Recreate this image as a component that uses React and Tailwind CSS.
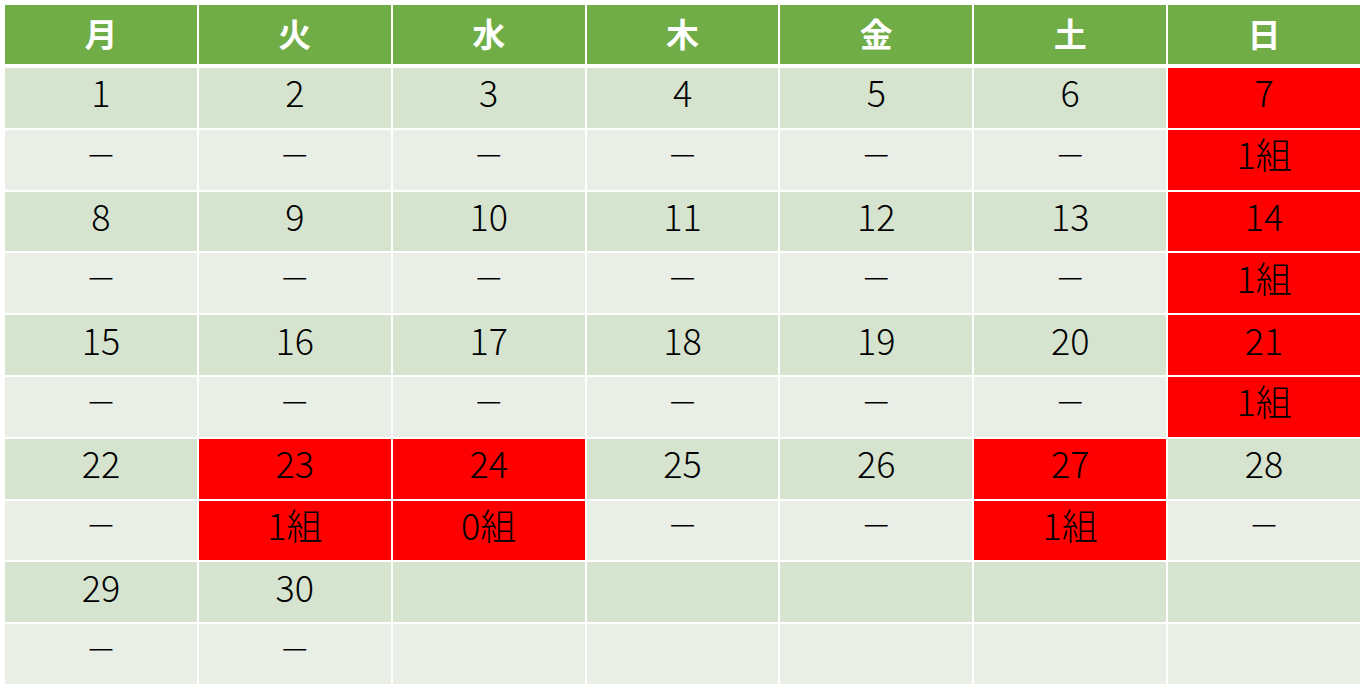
const days = ['月', '火', '水', '木', '金', '土', '日'];

const D = <span className="text-[31px]">－</span>;

// each week: [day number, slots] ; red = highlighted
const weeks = [
  [[1, D], [2, D], [3, D], [4, D], [5, D], [6, D], [7, '1組', true]],
  [[8, D], [9, D], [10, D], [11, D], [12, D], [13, D], [14, '1組', true]],
  [[15, D], [16, D], [17, D], [18, D], [19, D], [20, D], [21, '1組', true]],
  [[22, D], [23, '1組', true], [24, '0組', true], [25, D], [26, D], [27, '1組', true], [28, D]],
  [[29, D], [30, D], [null, ''], [null, ''], [null, ''], [null, ''], [null, '']],
];

function Cell({ children, red, band }) {
  const bg = red ? 'bg-[#ff0000]' : band === 1 ? 'bg-[#d5e3cf]' : 'bg-[#e9efe6]';
  return (
    <div className={`flex-1 flex items-center justify-center pb-[13px] ${bg}`}>
      {children}
    </div>
  );
}

export default function App() {
  return (
    <div
      className="w-[1367px] h-[689px] bg-white p-[5px] text-black"
      style={{ fontFamily: '"Noto Sans CJK JP", "Noto Sans", sans-serif' }}
    >
      <div className="w-[1355px] flex flex-col">
        <div className="flex gap-[2px] h-[59px]">
          {days.map((d) => (
            <div key={d} className="flex-1 bg-[#70ad47] flex items-center justify-center text-white font-bold text-[33px] pb-[2px]">
              {d}
            </div>
          ))}
        </div>
        <div className="mt-[4px] h-[616px] flex flex-col gap-[2px] text-[36px] font-light leading-none">
          {weeks.map((w, i) => (
            <div key={i} className="contents">
              <div className="flex-1 flex gap-[2px]">
                {w.map(([n, , red], j) => (
                  <Cell key={j} red={red} band={1}>{n}</Cell>
                ))}
              </div>
              <div className="flex-1 flex gap-[2px]">
                {w.map(([, s, red], j) => (
                  <Cell key={j} red={red} band={2}>{s}</Cell>
                ))}
              </div>
            </div>
          ))}
        </div>
      </div>
    </div>
  );
}
